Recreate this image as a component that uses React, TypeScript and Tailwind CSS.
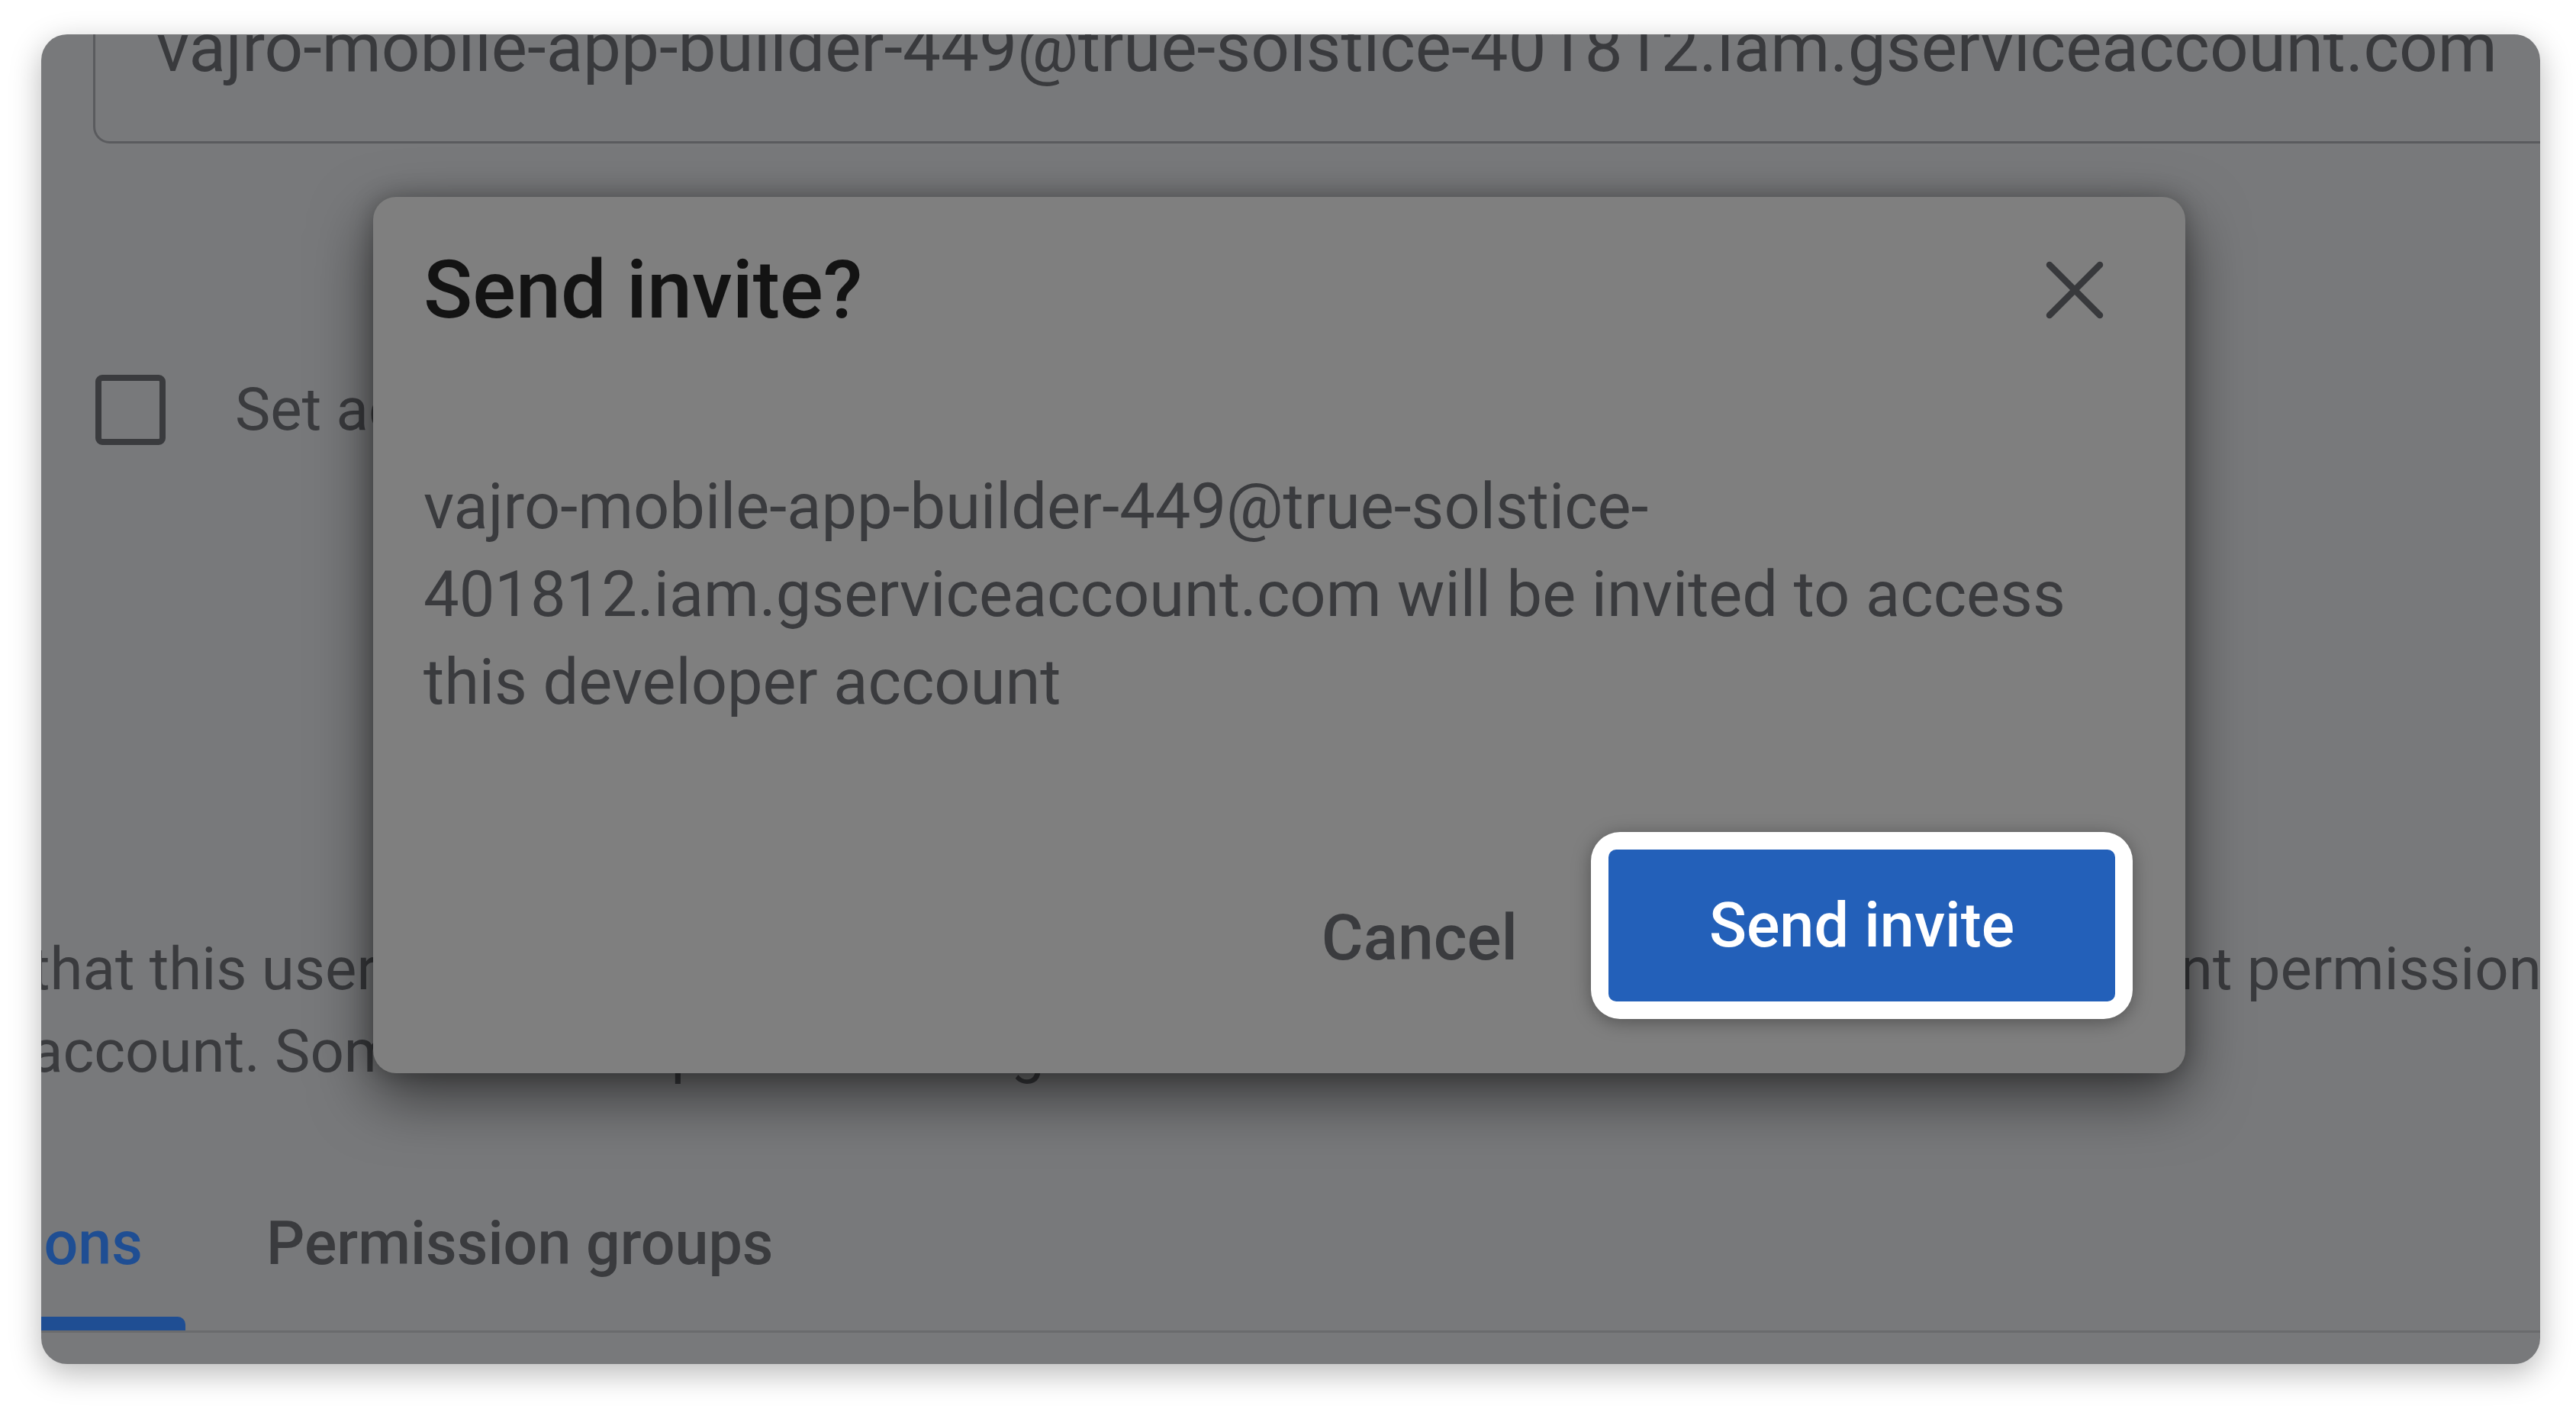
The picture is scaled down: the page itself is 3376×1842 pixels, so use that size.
export default function App() {
  return (
    <div className="w-[3376px] h-[1842px] bg-white pl-[54px] pt-[45px] [font-family:Roboto,'Liberation_Sans',sans-serif]">
      <div className="relative w-[3275px] h-[1742px] rounded-[34px] bg-[#78797b] overflow-hidden shadow-[0_12px_40px_rgba(0,0,0,0.28)] flex flex-col">
        {/* input field (clipped at top) */}
        <div className="mt-[-57px] ml-[68px] mr-[-100px] h-[200px] shrink-0 rounded-[22px] border-[3px] border-[#5a5b5e] pl-[80px] pt-[27px]">
          <span className="block text-[89px] leading-none text-[#393a3d] whitespace-nowrap">
            vajro-mobile-app-builder-449@true-solstice-401812.iam.gserviceaccount.com
          </span>
        </div>

        {/* checkbox row */}
        <div className="mt-[303px] ml-[71px] flex items-center gap-[91px] shrink-0">
          <div className="w-[92px] h-[92px] rounded-[9px] border-[8px] border-[#3a3b3e] shrink-0" />
          <span className="text-[78px] leading-none text-[#3a3b3e] whitespace-nowrap">Set access expiry date</span>
        </div>

        {/* paragraph */}
        <div className="mt-[633px] ml-[-14px] text-[78px] leading-[108px] text-[#3a3b3e] whitespace-nowrap shrink-0">
          <div className="flex justify-between mr-[-42px]">
            <span>that this user</span>
            <span>account permissions</span>
          </div>
          <div>account. Some account permissions give additional access.</div>
        </div>

        {/* tabs */}
        <div className="mt-[158px] flex flex-col shrink-0">
          <div className="flex">
            <div className="w-[189px] flex flex-col shrink-0">
              <div className="flex justify-end pr-[56px]">
                <span className="text-[79px] leading-none font-medium text-[#1f4e93] whitespace-nowrap">Account permissions</span>
              </div>
              <div className="mt-[56px] h-[18px] w-full bg-[#1f4e93] rounded-tr-[10px]" />
            </div>
            <div className="ml-[50px] px-[56px] flex flex-col">
              <span className="text-[79px] leading-none font-medium text-[#3a3b3e] whitespace-nowrap">Permission groups</span>
              <div className="mt-[56px] h-[18px]" />
            </div>
          </div>
          <div className="h-[3px] w-full bg-[#6a6b6d]" />
        </div>

        {/* dialog */}
        <div className="absolute left-[435px] top-[213px] w-[2375px] rounded-[30px] bg-[#7f7f7f] shadow-[0_30px_80px_rgba(0,0,0,0.55),0_0_30px_rgba(0,0,0,0.25)] flex flex-col">
          <div className="pl-[66px] pt-[69px] text-[106px] leading-none font-medium text-[#131313]">Send invite?</div>
          <svg className="absolute left-[2192px] top-[84px]" width="76" height="76" viewBox="0 0 76 76">
            <path d="M5 5L71 71M71 5L5 71" stroke="#38393c" strokeWidth="8.5" strokeLinecap="round" />
          </svg>
          <div className="mt-[173px] px-[66px] text-[83px] leading-[115px] text-[#3a3b3e] whitespace-nowrap">
            <div>vajro-mobile-app-builder-449@true-solstice-</div>
            <div>401812.iam.gserviceaccount.com will be invited to access</div>
            <div>this developer account</div>
          </div>
          <div className="mt-[139px] pb-[71px] pr-[69px] flex justify-end items-center gap-[96px]">
            <span className="pt-[32px] text-[84px] leading-none font-medium text-[#3a3b3e]">Cancel</span>
            <div className="p-[23px] bg-white rounded-[38px] shadow-[0_4px_24px_rgba(0,0,0,0.35)]">
              <div className="w-[664px] h-[199px] rounded-[10px] bg-[#2360b9] flex items-center justify-center text-[81px] leading-none font-medium text-white">
                Send invite
              </div>
            </div>
          </div>
        </div>
      </div>
    </div>
  );
}
